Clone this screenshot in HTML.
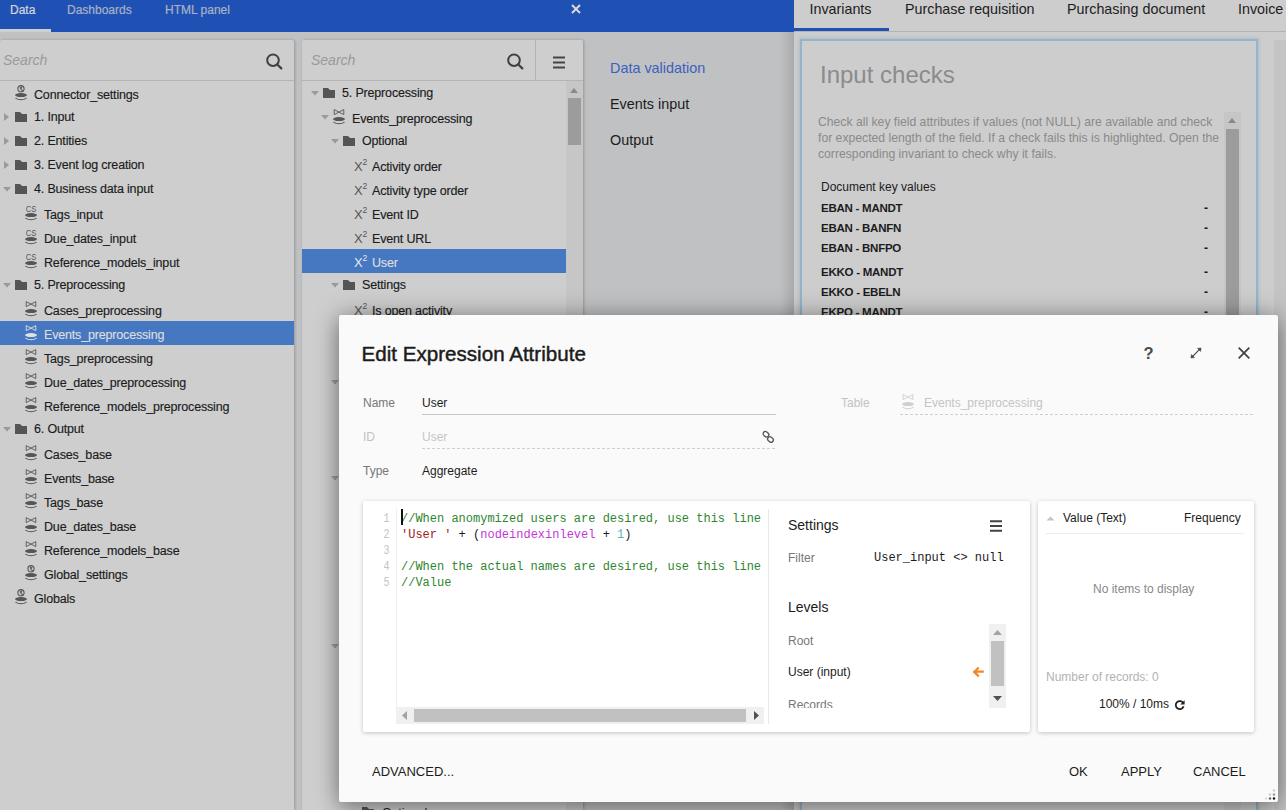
<!DOCTYPE html>
<html><head><meta charset="utf-8">
<style>
*{box-sizing:border-box;}
html,body{margin:0;padding:0;}
body{width:1286px;height:810px;overflow:hidden;position:relative;background:#c0c1c2;font-family:"Liberation Sans",sans-serif;font-size:12px;color:#1c1c1c;}
.a{position:absolute;}
.t{position:absolute;white-space:nowrap;line-height:14px;}
#top{left:0;top:0;width:794px;height:32px;background:#1f51b5;}
#rtop{left:794px;top:0;width:492px;height:32px;background:#cdcdcd;border-bottom:1px solid #b3b3b3;}
.panel{background:#cecece;border-radius:2px 2px 0 0;box-shadow:1px 0 3px rgba(0,0,0,0.22);}
.row{position:absolute;height:24px;left:0;right:0;}
.lbl{position:absolute;top:5px;white-space:nowrap;line-height:14px;font-size:12.5px;letter-spacing:-0.17px;-webkit-text-stroke:0.15px currentColor;}
.fl{position:absolute;top:5px;white-space:nowrap;line-height:14px;}
.sel{background:#4677c1;color:#dedede;}
.arr-r{position:absolute;width:0;height:0;border-top:4px solid transparent;border-bottom:4px solid transparent;border-left:5px solid #9a9a9a;}
.arr-d{position:absolute;width:0;height:0;border-left:4px solid transparent;border-right:4px solid transparent;border-top:5px solid #9a9a9a;}
svg{position:absolute;overflow:visible;}
</style></head><body>

<!-- top bar -->
<div id="top" class="a">
  <div class="t" style="left:10px;top:2.5px;color:#d4d6da;-webkit-text-stroke:0.2px #d4d6da;">Data</div>
  <div class="t" style="left:67px;top:2.5px;color:#a9b2c6;-webkit-text-stroke:0.2px #a9b2c6;">Dashboards</div>
  <div class="t" style="left:165px;top:2.5px;color:#a9b2c6;-webkit-text-stroke:0.2px #a9b2c6;">HTML panel</div>
  <div class="a" style="left:0;top:29px;width:51px;height:3px;background:#cfd0d2;"></div>
  <svg style="left:571px;top:4px" width="10" height="10" viewBox="0 0 10 10"><path d="M1 1L9 9M9 1L1 9" stroke="#dcdad8" stroke-width="2"/></svg>
</div>
<div id="rtop" class="a">
  <div class="t" style="left:15.5px;top:1px;font-size:14.3px;line-height:16px;color:#1c1c1c;">Invariants</div>
  <div class="t" style="left:111px;top:1px;font-size:14.3px;line-height:16px;color:#1c1c1c;">Purchase requisition</div>
  <div class="t" style="left:273px;top:1px;font-size:14.3px;line-height:16px;color:#1c1c1c;">Purchasing document</div>
  <div class="t" style="left:444px;top:1px;font-size:14.3px;line-height:16px;color:#1c1c1c;">Invoice</div>
  <div class="a" style="left:0;top:28px;width:95px;height:3px;background:#1f51b5;"></div>
</div>

<!-- left panel -->
<div class="a panel" style="left:0;top:40px;width:294px;height:770px;">
  <div class="a" style="left:0;top:40px;width:294px;height:1px;background:#b4b4b4;"></div>
  <div class="t" style="left:3px;top:12px;font-size:14px;line-height:16px;font-style:italic;color:#9a9a9a;">Search</div>
  <svg style="left:265px;top:12px" width="20" height="20" viewBox="0 0 20 20"><circle cx="8" cy="8.2" r="5.8" fill="none" stroke="#404040" stroke-width="2"/><path d="M12.3 12.5L16.3 16.4" stroke="#404040" stroke-width="2.2" stroke-linecap="round"/></svg>
</div>
<div id="ltree" class="a" style="left:0;top:81px;width:294px;height:600px;"><div class="row" style="top:0px;"><svg style="left:15px;top:3px" width="12" height="16" viewBox="0 0 12 16"><circle cx="6" cy="4.7" r="3.1" fill="none" stroke="#555" stroke-width="1.1"/><path d="M6.2 2.2L7.6 3.3L6.6 5.2L8.4 6.4L7.2 7.4L5.4 5.6L4.6 3.6Z" fill="#555" opacity="0.85"/><ellipse cx="6" cy="11.1" rx="6" ry="2" fill="#555"/><path d="M0.4 14.1Q6 17.4 11.6 14.1" fill="none" stroke="#555" stroke-width="1.1"/></svg><div class="lbl" style="left:34px;top:6.5px;">Connector_settings</div></div>
<div class="row" style="top:24px;"><svg style="left:4px;top:8px" width="5" height="8" viewBox="0 0 5 8"><path d="M0 0L5 4L0 8Z" fill="#9a9a9a"/></svg><svg style="left:15px;top:7px" width="12" height="10" viewBox="0 0 12 10"><path d="M0 0H5L7 2H12V10H0Z" fill="#555"/></svg><div class="lbl" style="left:34px;top:4.5px;">1. Input</div></div>
<div class="row" style="top:48px;"><svg style="left:4px;top:8px" width="5" height="8" viewBox="0 0 5 8"><path d="M0 0L5 4L0 8Z" fill="#9a9a9a"/></svg><svg style="left:15px;top:7px" width="12" height="10" viewBox="0 0 12 10"><path d="M0 0H5L7 2H12V10H0Z" fill="#555"/></svg><div class="lbl" style="left:34px;top:4.5px;">2. Entities</div></div>
<div class="row" style="top:72px;"><svg style="left:4px;top:8px" width="5" height="8" viewBox="0 0 5 8"><path d="M0 0L5 4L0 8Z" fill="#9a9a9a"/></svg><svg style="left:15px;top:7px" width="12" height="10" viewBox="0 0 12 10"><path d="M0 0H5L7 2H12V10H0Z" fill="#555"/></svg><div class="lbl" style="left:34px;top:4.5px;">3. Event log creation</div></div>
<div class="row" style="top:96px;"><svg style="left:3px;top:10px" width="8" height="5" viewBox="0 0 8 5"><path d="M0 0H8L4 4.5Z" fill="#9a9a9a"/></svg><svg style="left:15px;top:7px" width="12" height="10" viewBox="0 0 12 10"><path d="M0 0H5L7 2H12V10H0Z" fill="#555"/></svg><div class="lbl" style="left:34px;top:4.5px;">4. Business data input</div></div>
<div class="row" style="top:120px;"><svg style="left:25px;top:3px" width="12" height="16" viewBox="0 0 12 16"><text x="6" y="8.3" font-family="Liberation Sans" font-size="9.6" text-anchor="middle" fill="#555" textLength="10.5" lengthAdjust="spacingAndGlyphs">CS</text><ellipse cx="6" cy="11.1" rx="6" ry="2" fill="#555"/><path d="M0.4 14.1Q6 17.4 11.6 14.1" fill="none" stroke="#555" stroke-width="1.1"/></svg><div class="lbl" style="left:44px;top:6.5px;">Tags_input</div></div>
<div class="row" style="top:144px;"><svg style="left:25px;top:3px" width="12" height="16" viewBox="0 0 12 16"><text x="6" y="8.3" font-family="Liberation Sans" font-size="9.6" text-anchor="middle" fill="#555" textLength="10.5" lengthAdjust="spacingAndGlyphs">CS</text><ellipse cx="6" cy="11.1" rx="6" ry="2" fill="#555"/><path d="M0.4 14.1Q6 17.4 11.6 14.1" fill="none" stroke="#555" stroke-width="1.1"/></svg><div class="lbl" style="left:44px;top:6.5px;">Due_dates_input</div></div>
<div class="row" style="top:168px;"><svg style="left:25px;top:3px" width="12" height="16" viewBox="0 0 12 16"><text x="6" y="8.3" font-family="Liberation Sans" font-size="9.6" text-anchor="middle" fill="#555" textLength="10.5" lengthAdjust="spacingAndGlyphs">CS</text><ellipse cx="6" cy="11.1" rx="6" ry="2" fill="#555"/><path d="M0.4 14.1Q6 17.4 11.6 14.1" fill="none" stroke="#555" stroke-width="1.1"/></svg><div class="lbl" style="left:44px;top:6.5px;">Reference_models_input</div></div>
<div class="row" style="top:192px;"><svg style="left:3px;top:10px" width="8" height="5" viewBox="0 0 8 5"><path d="M0 0H8L4 4.5Z" fill="#9a9a9a"/></svg><svg style="left:15px;top:7px" width="12" height="10" viewBox="0 0 12 10"><path d="M0 0H5L7 2H12V10H0Z" fill="#555"/></svg><div class="lbl" style="left:34px;top:4.5px;">5. Preprocessing</div></div>
<div class="row" style="top:216px;"><svg style="left:25px;top:3px" width="12" height="16" viewBox="0 0 12 16"><path d="M1.2 1.6V6.6M10.8 1.6V6.6M1.2 1.6L10.8 6.6M10.8 1.6L1.2 6.6" stroke="#555" stroke-width="0.9" fill="none"/><ellipse cx="6" cy="11.1" rx="6" ry="2" fill="#555"/><path d="M0.4 14.1Q6 17.4 11.6 14.1" fill="none" stroke="#555" stroke-width="1.1"/></svg><div class="lbl" style="left:44px;top:6.5px;">Cases_preprocessing</div></div>
<div class="row sel" style="top:240px;"><svg style="left:25px;top:3px" width="12" height="16" viewBox="0 0 12 16"><path d="M1.2 1.6V6.6M10.8 1.6V6.6M1.2 1.6L10.8 6.6M10.8 1.6L1.2 6.6" stroke="#e0e0e0" stroke-width="0.9" fill="none"/><ellipse cx="6" cy="11.1" rx="6" ry="2" fill="#e0e0e0"/><path d="M0.4 14.1Q6 17.4 11.6 14.1" fill="none" stroke="#e0e0e0" stroke-width="1.1"/></svg><div class="lbl" style="left:44px;top:6.5px;">Events_preprocessing</div></div>
<div class="row" style="top:264px;"><svg style="left:25px;top:3px" width="12" height="16" viewBox="0 0 12 16"><path d="M1.2 1.6V6.6M10.8 1.6V6.6M1.2 1.6L10.8 6.6M10.8 1.6L1.2 6.6" stroke="#555" stroke-width="0.9" fill="none"/><ellipse cx="6" cy="11.1" rx="6" ry="2" fill="#555"/><path d="M0.4 14.1Q6 17.4 11.6 14.1" fill="none" stroke="#555" stroke-width="1.1"/></svg><div class="lbl" style="left:44px;top:6.5px;">Tags_preprocessing</div></div>
<div class="row" style="top:288px;"><svg style="left:25px;top:3px" width="12" height="16" viewBox="0 0 12 16"><path d="M1.2 1.6V6.6M10.8 1.6V6.6M1.2 1.6L10.8 6.6M10.8 1.6L1.2 6.6" stroke="#555" stroke-width="0.9" fill="none"/><ellipse cx="6" cy="11.1" rx="6" ry="2" fill="#555"/><path d="M0.4 14.1Q6 17.4 11.6 14.1" fill="none" stroke="#555" stroke-width="1.1"/></svg><div class="lbl" style="left:44px;top:6.5px;">Due_dates_preprocessing</div></div>
<div class="row" style="top:312px;"><svg style="left:25px;top:3px" width="12" height="16" viewBox="0 0 12 16"><path d="M1.2 1.6V6.6M10.8 1.6V6.6M1.2 1.6L10.8 6.6M10.8 1.6L1.2 6.6" stroke="#555" stroke-width="0.9" fill="none"/><ellipse cx="6" cy="11.1" rx="6" ry="2" fill="#555"/><path d="M0.4 14.1Q6 17.4 11.6 14.1" fill="none" stroke="#555" stroke-width="1.1"/></svg><div class="lbl" style="left:44px;top:6.5px;">Reference_models_preprocessing</div></div>
<div class="row" style="top:336px;"><svg style="left:3px;top:10px" width="8" height="5" viewBox="0 0 8 5"><path d="M0 0H8L4 4.5Z" fill="#9a9a9a"/></svg><svg style="left:15px;top:7px" width="12" height="10" viewBox="0 0 12 10"><path d="M0 0H5L7 2H12V10H0Z" fill="#555"/></svg><div class="lbl" style="left:34px;top:4.5px;">6. Output</div></div>
<div class="row" style="top:360px;"><svg style="left:25px;top:3px" width="12" height="16" viewBox="0 0 12 16"><path d="M1.2 1.6V6.6M10.8 1.6V6.6M1.2 1.6L10.8 6.6M10.8 1.6L1.2 6.6" stroke="#555" stroke-width="0.9" fill="none"/><ellipse cx="6" cy="11.1" rx="6" ry="2" fill="#555"/><path d="M0.4 14.1Q6 17.4 11.6 14.1" fill="none" stroke="#555" stroke-width="1.1"/></svg><div class="lbl" style="left:44px;top:6.5px;">Cases_base</div></div>
<div class="row" style="top:384px;"><svg style="left:25px;top:3px" width="12" height="16" viewBox="0 0 12 16"><path d="M1.2 1.6V6.6M10.8 1.6V6.6M1.2 1.6L10.8 6.6M10.8 1.6L1.2 6.6" stroke="#555" stroke-width="0.9" fill="none"/><ellipse cx="6" cy="11.1" rx="6" ry="2" fill="#555"/><path d="M0.4 14.1Q6 17.4 11.6 14.1" fill="none" stroke="#555" stroke-width="1.1"/></svg><div class="lbl" style="left:44px;top:6.5px;">Events_base</div></div>
<div class="row" style="top:408px;"><svg style="left:25px;top:3px" width="12" height="16" viewBox="0 0 12 16"><path d="M1.2 1.6V6.6M10.8 1.6V6.6M1.2 1.6L10.8 6.6M10.8 1.6L1.2 6.6" stroke="#555" stroke-width="0.9" fill="none"/><ellipse cx="6" cy="11.1" rx="6" ry="2" fill="#555"/><path d="M0.4 14.1Q6 17.4 11.6 14.1" fill="none" stroke="#555" stroke-width="1.1"/></svg><div class="lbl" style="left:44px;top:6.5px;">Tags_base</div></div>
<div class="row" style="top:432px;"><svg style="left:25px;top:3px" width="12" height="16" viewBox="0 0 12 16"><path d="M1.2 1.6V6.6M10.8 1.6V6.6M1.2 1.6L10.8 6.6M10.8 1.6L1.2 6.6" stroke="#555" stroke-width="0.9" fill="none"/><ellipse cx="6" cy="11.1" rx="6" ry="2" fill="#555"/><path d="M0.4 14.1Q6 17.4 11.6 14.1" fill="none" stroke="#555" stroke-width="1.1"/></svg><div class="lbl" style="left:44px;top:6.5px;">Due_dates_base</div></div>
<div class="row" style="top:456px;"><svg style="left:25px;top:3px" width="12" height="16" viewBox="0 0 12 16"><path d="M1.2 1.6V6.6M10.8 1.6V6.6M1.2 1.6L10.8 6.6M10.8 1.6L1.2 6.6" stroke="#555" stroke-width="0.9" fill="none"/><ellipse cx="6" cy="11.1" rx="6" ry="2" fill="#555"/><path d="M0.4 14.1Q6 17.4 11.6 14.1" fill="none" stroke="#555" stroke-width="1.1"/></svg><div class="lbl" style="left:44px;top:6.5px;">Reference_models_base</div></div>
<div class="row" style="top:480px;"><svg style="left:25px;top:3px" width="12" height="16" viewBox="0 0 12 16"><circle cx="6" cy="4.7" r="3.1" fill="none" stroke="#555" stroke-width="1.1"/><path d="M6.2 2.2L7.6 3.3L6.6 5.2L8.4 6.4L7.2 7.4L5.4 5.6L4.6 3.6Z" fill="#555" opacity="0.85"/><ellipse cx="6" cy="11.1" rx="6" ry="2" fill="#555"/><path d="M0.4 14.1Q6 17.4 11.6 14.1" fill="none" stroke="#555" stroke-width="1.1"/></svg><div class="lbl" style="left:44px;top:6.5px;">Global_settings</div></div>
<div class="row" style="top:504px;"><svg style="left:15px;top:3px" width="12" height="16" viewBox="0 0 12 16"><circle cx="6" cy="4.7" r="3.1" fill="none" stroke="#555" stroke-width="1.1"/><path d="M6.2 2.2L7.6 3.3L6.6 5.2L8.4 6.4L7.2 7.4L5.4 5.6L4.6 3.6Z" fill="#555" opacity="0.85"/><ellipse cx="6" cy="11.1" rx="6" ry="2" fill="#555"/><path d="M0.4 14.1Q6 17.4 11.6 14.1" fill="none" stroke="#555" stroke-width="1.1"/></svg><div class="lbl" style="left:34px;top:6.5px;">Globals</div></div></div>

<!-- middle panel -->
<div class="a panel" style="left:302px;top:40px;width:281px;height:770px;">
  <div class="a" style="left:0;top:40px;width:281px;height:1px;background:#b4b4b4;"></div>
  <div class="a" style="left:233px;top:0;width:1px;height:40px;background:#b4b4b4;"></div>
  <div class="t" style="left:9px;top:12px;font-size:14px;line-height:16px;font-style:italic;color:#9a9a9a;">Search</div>
  <svg style="left:204px;top:12px" width="20" height="20" viewBox="0 0 20 20"><circle cx="8" cy="8.2" r="5.8" fill="none" stroke="#404040" stroke-width="2"/><path d="M12.3 12.5L16.3 16.4" stroke="#404040" stroke-width="2.2" stroke-linecap="round"/></svg>
  <svg style="left:251px;top:16px" width="12" height="12" viewBox="0 0 12 12"><path d="M0 1.5H12M0 6.5H12M0 11.5H12" stroke="#444" stroke-width="2"/></svg>
  <div class="a" style="left:264px;top:41px;width:17px;height:729px;background:#c6c6c6;"></div>
  <div class="a" style="left:266px;top:58px;width:13px;height:47px;background:#9c9c9c;"></div>
  <div class="a" style="left:268px;top:48px;width:0;height:0;border-left:4.5px solid transparent;border-right:4.5px solid transparent;border-bottom:5px solid #8a8a8a;"></div>
</div>
<div id="mtree" class="a" style="left:302px;top:81px;width:264px;height:729px;overflow:hidden;"><div class="row" style="top:0px;"><svg style="left:9px;top:10px" width="8" height="5" viewBox="0 0 8 5"><path d="M0 0H8L4 4.5Z" fill="#9a9a9a"/></svg><svg style="left:21px;top:7px" width="12" height="10" viewBox="0 0 12 10"><path d="M0 0H5L7 2H12V10H0Z" fill="#555"/></svg><div class="lbl" style="left:40px;top:4.5px;">5. Preprocessing</div></div>
<div class="row" style="top:24px;"><svg style="left:19px;top:10px" width="8" height="5" viewBox="0 0 8 5"><path d="M0 0H8L4 4.5Z" fill="#9a9a9a"/></svg><svg style="left:31px;top:3px" width="12" height="16" viewBox="0 0 12 16"><path d="M1.2 1.6V6.6M10.8 1.6V6.6M1.2 1.6L10.8 6.6M10.8 1.6L1.2 6.6" stroke="#555" stroke-width="0.9" fill="none"/><ellipse cx="6" cy="11.1" rx="6" ry="2" fill="#555"/><path d="M0.4 14.1Q6 17.4 11.6 14.1" fill="none" stroke="#555" stroke-width="1.1"/></svg><div class="lbl" style="left:50px;top:6.5px;">Events_preprocessing</div></div>
<div class="row" style="top:48px;"><svg style="left:29px;top:10px" width="8" height="5" viewBox="0 0 8 5"><path d="M0 0H8L4 4.5Z" fill="#9a9a9a"/></svg><svg style="left:41px;top:7px" width="12" height="10" viewBox="0 0 12 10"><path d="M0 0H5L7 2H12V10H0Z" fill="#555"/></svg><div class="lbl" style="left:60px;top:4.5px;">Optional</div></div>
<div class="row" style="top:72px;"><div class="t" style="left:52px;top:7px;font-size:13px;line-height:14px;color:#555;">X</div><div class="t" style="left:60.5px;top:4px;font-size:8.5px;line-height:10px;color:#555;">2</div><div class="lbl" style="left:70px;top:6.5px;">Activity order</div></div>
<div class="row" style="top:96px;"><div class="t" style="left:52px;top:7px;font-size:13px;line-height:14px;color:#555;">X</div><div class="t" style="left:60.5px;top:4px;font-size:8.5px;line-height:10px;color:#555;">2</div><div class="lbl" style="left:70px;top:6.5px;">Activity type order</div></div>
<div class="row" style="top:120px;"><div class="t" style="left:52px;top:7px;font-size:13px;line-height:14px;color:#555;">X</div><div class="t" style="left:60.5px;top:4px;font-size:8.5px;line-height:10px;color:#555;">2</div><div class="lbl" style="left:70px;top:6.5px;">Event ID</div></div>
<div class="row" style="top:144px;"><div class="t" style="left:52px;top:7px;font-size:13px;line-height:14px;color:#555;">X</div><div class="t" style="left:60.5px;top:4px;font-size:8.5px;line-height:10px;color:#555;">2</div><div class="lbl" style="left:70px;top:6.5px;">Event URL</div></div>
<div class="row sel" style="top:168px;"><div class="t" style="left:52px;top:7px;font-size:13px;line-height:14px;color:#e8e8e8;">X</div><div class="t" style="left:60.5px;top:4px;font-size:8.5px;line-height:10px;color:#e8e8e8;">2</div><div class="lbl" style="left:70px;top:6.5px;">User</div></div>
<div class="row" style="top:192px;"><svg style="left:29px;top:10px" width="8" height="5" viewBox="0 0 8 5"><path d="M0 0H8L4 4.5Z" fill="#9a9a9a"/></svg><svg style="left:41px;top:7px" width="12" height="10" viewBox="0 0 12 10"><path d="M0 0H5L7 2H12V10H0Z" fill="#555"/></svg><div class="lbl" style="left:60px;top:4.5px;">Settings</div></div>
<div class="row" style="top:216px;"><div class="t" style="left:52px;top:7px;font-size:13px;line-height:14px;color:#555;">X</div><div class="t" style="left:60.5px;top:4px;font-size:8.5px;line-height:10px;color:#555;">2</div><div class="lbl" style="left:70px;top:6.5px;">Is open activity</div></div></div>

<!-- nav -->
<div class="t" style="left:610px;top:60px;font-size:14.4px;line-height:16px;color:#3c5fc0;">Data validation</div>
<div class="t" style="left:610px;top:96px;font-size:14.4px;line-height:16px;color:#1c1c1c;">Events input</div>
<div class="t" style="left:610px;top:132px;font-size:14.4px;line-height:16px;color:#1c1c1c;">Output</div>

<!-- right panel -->
<div class="a" style="left:780px;top:32px;width:14px;height:778px;background:linear-gradient(to right,rgba(0,0,0,0),rgba(0,0,0,0.12));"></div>
<div class="a" style="left:794px;top:32px;width:492px;height:778px;background:#cdcdcd;">
  <div class="a" style="left:480px;top:8px;width:12px;height:770px;background:#c4c4c4;"></div>
  <div class="a" style="left:6px;top:7px;width:458px;height:780px;border:2px solid #93b4ca;box-shadow:0 0 3px 1px rgba(141,176,200,0.5);"></div>
  <div class="t" style="left:26px;top:29px;font-size:24px;line-height:28px;color:#8b8b8b;">Input checks</div>
  <div class="a" style="left:24px;top:81.5px;width:410px;font-size:12.2px;line-height:16px;color:#8a8a8a;">Check all key field attributes if values (not NULL) are available and check for expected length of the field. If a check fails this is highlighted. Open the corresponding invariant to check why it fails.</div>
  <div class="a" style="left:430px;top:80px;width:17px;height:700px;background:#c6c6c6;"></div>
  <div class="a" style="left:432px;top:97px;width:13px;height:600px;background:#9c9c9c;"></div>
  <div class="a" style="left:434px;top:86px;width:0;height:0;border-left:4.5px solid transparent;border-right:4.5px solid transparent;border-bottom:5px solid #8a8a8a;"></div>
  <div class="t" style="left:27px;top:148px;color:#1c1c1c;">Document key values</div>
  <div class="t" style="left:27px;top:169px;font-weight:bold;font-size:11.5px;letter-spacing:-0.25px;color:#1c1c1c;">EBAN - MANDT</div>
  <div class="t" style="left:27px;top:189px;font-weight:bold;font-size:11.5px;letter-spacing:-0.25px;color:#1c1c1c;">EBAN - BANFN</div>
  <div class="t" style="left:27px;top:209px;font-weight:bold;font-size:11.5px;letter-spacing:-0.25px;color:#1c1c1c;">EBAN - BNFPO</div>
  <div class="t" style="left:27px;top:233px;font-weight:bold;font-size:11.5px;letter-spacing:-0.25px;color:#1c1c1c;">EKKO - MANDT</div>
  <div class="t" style="left:27px;top:253px;font-weight:bold;font-size:11.5px;letter-spacing:-0.25px;color:#1c1c1c;">EKKO - EBELN</div>
  <div class="t" style="left:27px;top:273px;font-weight:bold;font-size:11.5px;letter-spacing:-0.25px;color:#1c1c1c;">EKPO - MANDT</div>
  <div class="t" style="left:410px;top:169px;font-weight:bold;color:#1c1c1c;">-</div>
  <div class="t" style="left:410px;top:189px;font-weight:bold;color:#1c1c1c;">-</div>
  <div class="t" style="left:410px;top:209px;font-weight:bold;color:#1c1c1c;">-</div>
  <div class="t" style="left:410px;top:233px;font-weight:bold;color:#1c1c1c;">-</div>
  <div class="t" style="left:410px;top:253px;font-weight:bold;color:#1c1c1c;">-</div>
  <div class="t" style="left:410px;top:273px;font-weight:bold;color:#1c1c1c;">-</div>
</div>

<!-- bottom of middle tree under dialog -->
<svg style="left:331px;top:380px" width="8" height="5" viewBox="0 0 8 5"><path d="M0 0H8L4 4.5Z" fill="#9a9a9a"/></svg>
<svg style="left:331px;top:476px" width="8" height="5" viewBox="0 0 8 5"><path d="M0 0H8L4 4.5Z" fill="#9a9a9a"/></svg>
<svg style="left:331px;top:644px" width="8" height="5" viewBox="0 0 8 5"><path d="M0 0H8L4 4.5Z" fill="#9a9a9a"/></svg>
<svg style="left:362px;top:807px" width="12" height="10" viewBox="0 0 12 10"><path d="M0 0H5L7 2H12V10H0Z" fill="#555"/></svg>
<div class="t" style="left:382px;top:806px;font-size:12.5px;letter-spacing:-0.17px;color:#1c1c1c;">Optional</div>

<!-- dialog -->
<div id="dlg" class="a" style="left:339px;top:315px;width:939px;height:487px;background:#fafafa;border-radius:2px;box-shadow:0 0 24px rgba(0,0,0,0.35), 0 10px 20px rgba(0,0,0,0.2);">
  <div class="t" style="left:22.5px;top:27px;font-size:20.6px;line-height:24px;color:#1c1c1c;-webkit-text-stroke:0.45px #1c1c1c;">Edit Expression Attribute</div>
  <svg style="left:805px;top:32px" width="9" height="12" viewBox="0 0 9 12"><text x="4.5" y="11.8" font-family="Liberation Sans" font-weight="bold" font-size="16.5" text-anchor="middle" fill="#4a4a4a">?</text></svg>
  <svg style="left:852px;top:33px" width="10" height="10" viewBox="0 0 10 10"><path d="M10 0L6.6 0.4L9.6 3.4Z M0 10L0.4 6.6L3.4 9.6Z" fill="#444" stroke="#444" stroke-width="0.6"/><path d="M8.3 1.7L1.7 8.3" stroke="#444" stroke-width="1.1"/></svg>
  <svg style="left:899px;top:32px" width="12" height="12" viewBox="0 0 12 12"><path d="M0.7 0.7L11.3 11.3M11.3 0.7L0.7 11.3" stroke="#444" stroke-width="1.8"/></svg>

  <div class="t" style="left:24px;top:81px;color:#777;">Name</div>
  <div class="t" style="left:83px;top:81px;color:#1c1c1c;">User</div>
  <div class="a" style="left:83px;top:99px;width:354px;height:1px;background:#c6c6c6;"></div>
  <div class="t" style="left:24px;top:115px;color:#c2c2c2;">ID</div>
  <div class="t" style="left:83px;top:115px;color:#c6c6c6;">User</div>
  <div class="a" style="left:83px;top:133px;width:354px;height:1px;background:repeating-linear-gradient(to right,#cfcfcf 0,#cfcfcf 3px,transparent 3px,transparent 5px);"></div>
  <svg style="left:423px;top:116px" width="13" height="12" viewBox="0 0 13 12"><rect x="1" y="1" width="6" height="4.5" rx="2.2" transform="rotate(40 4 3.2)" fill="none" stroke="#555" stroke-width="1.3"/><rect x="5.5" y="6.3" width="6" height="4.5" rx="2.2" transform="rotate(40 8.5 8.5)" fill="none" stroke="#555" stroke-width="1.3"/></svg>
  <div class="t" style="left:24px;top:149px;color:#777;">Type</div>
  <div class="t" style="left:83px;top:149px;color:#1c1c1c;">Aggregate</div>

  <div class="t" style="left:502px;top:81px;color:#c2c2c2;">Table</div>
  <div class="a" style="left:561px;top:99px;width:354px;height:1px;background:repeating-linear-gradient(to right,#cfcfcf 0,#cfcfcf 3px,transparent 3px,transparent 5px);"></div>
  <div class="t" style="left:585px;top:81px;color:#c4c4c4;">Events_preprocessing</div>
  <svg style="left:563px;top:78px" width="12" height="16" viewBox="0 0 12 16"><path d="M1.2 1.6V6.6M10.8 1.6V6.6M1.2 1.6L10.8 6.6M10.8 1.6L1.2 6.6" stroke="#cfcfcf" stroke-width="0.9" fill="none"/><ellipse cx="6" cy="11.1" rx="6" ry="2" fill="#cfcfcf"/><path d="M0.4 14.1Q6 17.4 11.6 14.1" fill="none" stroke="#cfcfcf" stroke-width="1.1"/></svg>

  <!-- editor card -->
  <div class="a" style="left:24px;top:186px;width:667px;height:231px;background:#fff;border-radius:2px;box-shadow:0 1px 4px rgba(0,0,0,0.22);">
    <div class="a" style="left:33px;top:8px;width:1px;height:215px;background:#efefef;"></div>
    <div class="a" style="left:405px;top:8px;width:1px;height:215px;background:#e8e8e8;"></div>
    <div class="a" style="left:0;top:10px;width:26.5px;font-family:'Liberation Mono',monospace;font-size:12.5px;line-height:16px;color:#c4c4c4;text-align:right;transform:scaleX(0.8);transform-origin:right;">1<br>2<br>3<br>4<br>5</div>
    <div class="a" style="left:38px;top:10px;font-family:'Liberation Mono',monospace;font-size:12px;line-height:16px;white-space:pre;color:#1c1c1c;"><span style="color:#2f862f">//When anomymized users are desired, use this line</span>
<span style="color:#a31a1a">'User '</span> + (<span style="color:#c436d8">nodeindexinlevel</span> + <span style="color:#5fb3b3">1</span>)

<span style="color:#2f862f">//When the actual names are desired, use this line</span>
<span style="color:#2f862f">//Value</span></div>
    <div class="a" style="left:38px;top:8px;width:2px;height:16px;background:#111;"></div>
    <div class="a" style="left:33px;top:206px;width:368px;height:17px;background:#f0f0f0;"></div>
    <div class="a" style="left:51px;top:208px;width:332px;height:13px;background:#c1c1c1;"></div>
    <svg style="left:39px;top:210px" width="5" height="9" viewBox="0 0 5 9"><path d="M5 0V9L0 4.5Z" fill="#a3a3a3"/></svg>
    <svg style="left:391px;top:210px" width="5" height="9" viewBox="0 0 5 9"><path d="M0 0V9L5 4.5Z" fill="#505050"/></svg>

    <div class="t" style="left:425px;top:16px;font-size:14px;line-height:16px;color:#1c1c1c;">Settings</div>
    <svg style="left:627px;top:19px" width="12" height="12" viewBox="0 0 12 12"><path d="M0 1.2H12M0 6H12M0 10.8H12" stroke="#444" stroke-width="2"/></svg>
    <div class="t" style="left:425px;top:50px;color:#777;">Filter</div>
    <div class="t" style="left:511px;top:50px;font-family:'Liberation Mono',monospace;font-size:12px;color:#1c1c1c;">User_input &lt;&gt; null</div>
    <div class="t" style="left:425px;top:98px;font-size:14px;line-height:16px;color:#1c1c1c;">Levels</div>
    <div class="a" style="left:425px;top:123px;width:180px;height:84px;overflow:hidden;">
      <div class="t" style="left:0;top:10px;color:#777;">Root</div>
      <div class="t" style="left:0;top:41px;color:#1c1c1c;">User (input)</div>
      <div class="t" style="left:0;top:74px;color:#777;">Records</div>
    </div>
    <svg style="left:609px;top:166px" width="11" height="10" viewBox="0 0 11 10"><path d="M10.7 4.6H2.5M6 1.2L2.2 4.9L6 8.6" stroke="#f5861f" stroke-width="2.2" fill="none" stroke-linecap="square"/></svg>
    <div class="a" style="left:626px;top:123px;width:17px;height:84px;background:#f0f0f0;"></div>
    <div class="a" style="left:628px;top:140px;width:13px;height:45px;background:#c1c1c1;"></div>
    <svg style="left:630px;top:129px" width="9" height="5" viewBox="0 0 9 5"><path d="M0 5H9L4.5 0Z" fill="#a3a3a3"/></svg>
    <svg style="left:630px;top:195px" width="9" height="5" viewBox="0 0 9 5"><path d="M0 0H9L4.5 5Z" fill="#505050"/></svg>
  </div>

  <!-- value card -->
  <div class="a" style="left:699px;top:186px;width:216px;height:231px;background:#fff;border-radius:2px;box-shadow:0 1px 4px rgba(0,0,0,0.22);">
    <svg style="left:8px;top:15px" width="9" height="5" viewBox="0 0 9 5"><path d="M0.5 4.5H8.5L4.5 0.5Z" fill="#c4c4c4"/></svg>
    <div class="t" style="left:25px;top:10px;color:#1c1c1c;">Value (Text)</div>
    <div class="t" style="left:146px;top:10px;color:#1c1c1c;">Frequency</div>
    <div class="a" style="left:8px;top:32px;width:198px;height:1px;background:#ededed;"></div>
    <div class="t" style="left:55px;top:81px;color:#888;">No items to display</div>
    <div class="t" style="left:8px;top:169px;color:#b2b2b2;">Number of records: 0</div>
    <div class="t" style="left:61px;top:196px;color:#1c1c1c;">100% / 10ms</div>
    <svg style="left:137px;top:199px" width="10" height="10" viewBox="0 0 10 10"><path d="M8.3 3.2A4 4 0 1 0 8.6 6.3" stroke="#222" stroke-width="1.8" fill="none"/><path d="M9.6 0.3V4.6H5.3Z" fill="#222"/></svg>
  </div>

  <div class="t" style="left:33px;top:449px;font-size:13px;line-height:16px;color:#1c1c1c;">ADVANCED...</div>
  <div class="t" style="left:730px;top:449px;font-size:13px;line-height:16px;color:#1c1c1c;">OK</div>
  <div class="t" style="left:782px;top:449px;font-size:13px;line-height:16px;color:#1c1c1c;">APPLY</div>
  <div class="t" style="left:854px;top:449px;font-size:13px;line-height:16px;color:#1c1c1c;">CANCEL</div>
  <svg style="left:927px;top:473px" width="10" height="10" viewBox="0 0 10 10"><circle cx="8" cy="2.5" r="1.2" fill="#ccc"/><circle cx="4" cy="6.5" r="1.2" fill="#ccc"/><circle cx="8" cy="6.5" r="1.2" fill="#999"/><circle cx="0" cy="10.5" r="1.2" fill="#ddd"/><circle cx="4" cy="10.5" r="1.2" fill="#666"/><circle cx="8" cy="10.5" r="1.2" fill="#111"/></svg>
</div>


<script>
</script>
</body></html>
